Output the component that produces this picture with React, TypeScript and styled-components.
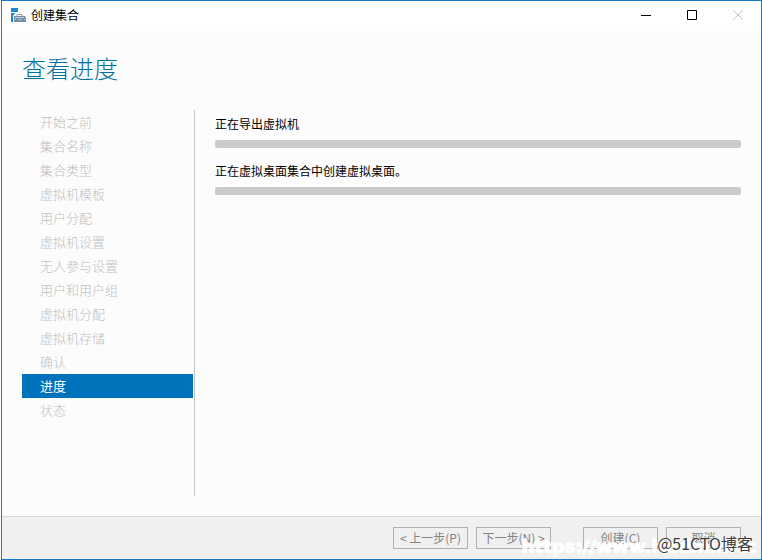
import React from "react";
import styled, { createGlobalStyle } from "styled-components";

const GlobalStyle = createGlobalStyle`
  * { box-sizing: border-box; }
  body {
    margin: 0;
    background: #fff;
    font-family: "Noto Sans CJK SC", sans-serif;
    font-size: 12px;
    color: #000;
  }
`;

const Window = styled.div`
  display: flex;
  flex-direction: column;
  min-height: 100vh;
  margin-left: 1px;
  border: 1px solid #1979ca;
  background: #fcfcfc;
  position: relative;
`;

const TitleBar = styled.header`
  display: flex;
  align-items: center;
  height: 30px;
  padding: 0 0 2px 9px;
  background: #fff;
`;

const WindowTitle = styled.span`
  flex: 1;
  margin-left: 5px;
  line-height: 20px;
`;

const CaptionButton = styled.button`
  display: flex;
  align-items: center;
  justify-content: center;
  width: 46px;
  height: 28px;
  padding: 0;
  border: 0;
  background: transparent;
`;

const Heading = styled.h1`
  margin: 19px 20px 0;
  font-size: 24px;
  line-height: 36px;
  font-weight: 300;
  color: #00709c;
`;

const Content = styled.div`
  display: flex;
  flex: 1;
  padding: 24px 20px 20px;
`;

const Steps = styled.nav`
  width: 173px;
  padding-right: 1px;
  border-right: 1px solid #c6c6c6;
`;

const StepList = styled.ol`
  margin: 0;
  padding: 0;
  list-style: none;
`;

const Step = styled.li<{ $current?: boolean }>`
  padding-left: 18px;
  font-size: 13px;
  line-height: 24px;
  font-weight: ${(p) => (p.$current ? 400 : 300)};
  color: ${(p) => (p.$current ? "#fff" : "#c0c0c0")};
  background: ${(p) => (p.$current ? "#0072bc" : "transparent")};
`;

const Tasks = styled.main`
  flex: 1;
  padding: 4px 0 0 20px;
`;

const Task = styled.section`
  margin-bottom: 13px;
`;

const TaskLabel = styled.div`
  margin-bottom: 6px;
  line-height: 20px;
`;

const Track = styled.div`
  height: 8px;
  border-radius: 2px;
  background: #cbcbcb;
`;

const Footer = styled.footer`
  display: flex;
  justify-content: flex-end;
  gap: 8px;
  padding: 10px 20px;
  border-top: 1px solid #d9d9d9;
  background: #f0f0f0;
`;

const ButtonPair = styled.div`
  display: flex;
  gap: 8px;
  margin-right: 24px;
`;

const Button = styled.button`
  width: 75px;
  height: 22px;
  padding: 0;
  border: 1px solid #adb2b5;
  background: #f0f0f0;
  color: #838383;
  font-family: "Noto Sans CJK SC", sans-serif;
  font-size: 12px;
  line-height: 20px;
  white-space: nowrap;
`;

const SiteMark = styled.span`
  position: absolute;
  right: 4px;
  bottom: 0;
  font: 700 18px/24px "DejaVu Sans", sans-serif;
  color: #fff;
  -webkit-text-stroke: 1px #fff;
  pointer-events: none;
`;

const BlogMark = styled.span`
  position: absolute;
  right: 8px;
  bottom: 6px;
  font-size: 16px;
  line-height: 20px;
  color: #3c3c3c;
  text-shadow: 1px 1px 0 #fff;
  pointer-events: none;
`;

const steps = [
  "开始之前", "集合名称", "集合类型", "虚拟机模板", "用户分配", "虚拟机设置", "无人参与设置",
  "用户和用户组", "虚拟机分配", "虚拟机存储", "确认", "进度", "状态",
];

const tasks = ["正在导出虚拟机", "正在虚拟桌面集合中创建虚拟桌面。"];

const ServerIcon = () => (
  <svg width="15" height="15" viewBox="0 0 15 15" aria-hidden="true">
    <path d="M0 0h7v4H0zM0 5h4l-2 3v6H0z" fill="#1e88d8" />
    <path d="M6 8V6.500h5V8" fill="none" stroke="#8fa3b1" />
    <path d="M3 8h11l1 2v4H3z" fill="#7390a5" />
    <path d="M4 9h9v1H4z" fill="#c7d4dd" />
    <path d="M3 11h2v1H3zM7 11h4v1H7zM13 11h2v1h-2z" fill="#a9bac6" />
  </svg>
);

export default function App() {
  return (
    <>
      <GlobalStyle />
      <Window>
        <TitleBar>
          <ServerIcon />
          <WindowTitle>创建集合</WindowTitle>
          <CaptionButton aria-label="最小化">
            <svg width="10" height="10"><path d="M0 5.500h10" stroke="#000" /></svg>
          </CaptionButton>
          <CaptionButton aria-label="最大化">
            <svg width="10" height="10"><path d="M.5.5h9v9h-9z" fill="none" stroke="#000" /></svg>
          </CaptionButton>
          <CaptionButton aria-label="关闭" disabled>
            <svg width="10" height="10"><path d="M0 0l10 10M10 0L0 10" stroke="#c4c4c4" /></svg>
          </CaptionButton>
        </TitleBar>
        <Heading>查看进度</Heading>
        <Content>
          <Steps>
            <StepList>
              {steps.map((s) => (
                <Step key={s} $current={s === "进度"} aria-current={s === "进度" ? "step" : undefined}>
                  {s}
                </Step>
              ))}
            </StepList>
          </Steps>
          <Tasks>
            {tasks.map((t) => (
              <Task key={t}>
                <TaskLabel>{t}</TaskLabel>
                <Track role="progressbar" aria-label={t} />
              </Task>
            ))}
          </Tasks>
        </Content>
        <Footer>
          <ButtonPair>
            <Button disabled>&lt; 上一步(P)</Button>
            <Button disabled>下一步(N) &gt;</Button>
          </ButtonPair>
          <Button disabled>创建(C)</Button>
          <Button disabled>取消</Button>
        </Footer>
        <SiteMark>https://www.itadmin.cc</SiteMark>
        <BlogMark>@51CTO博客</BlogMark>
      </Window>
    </>
  );
}
